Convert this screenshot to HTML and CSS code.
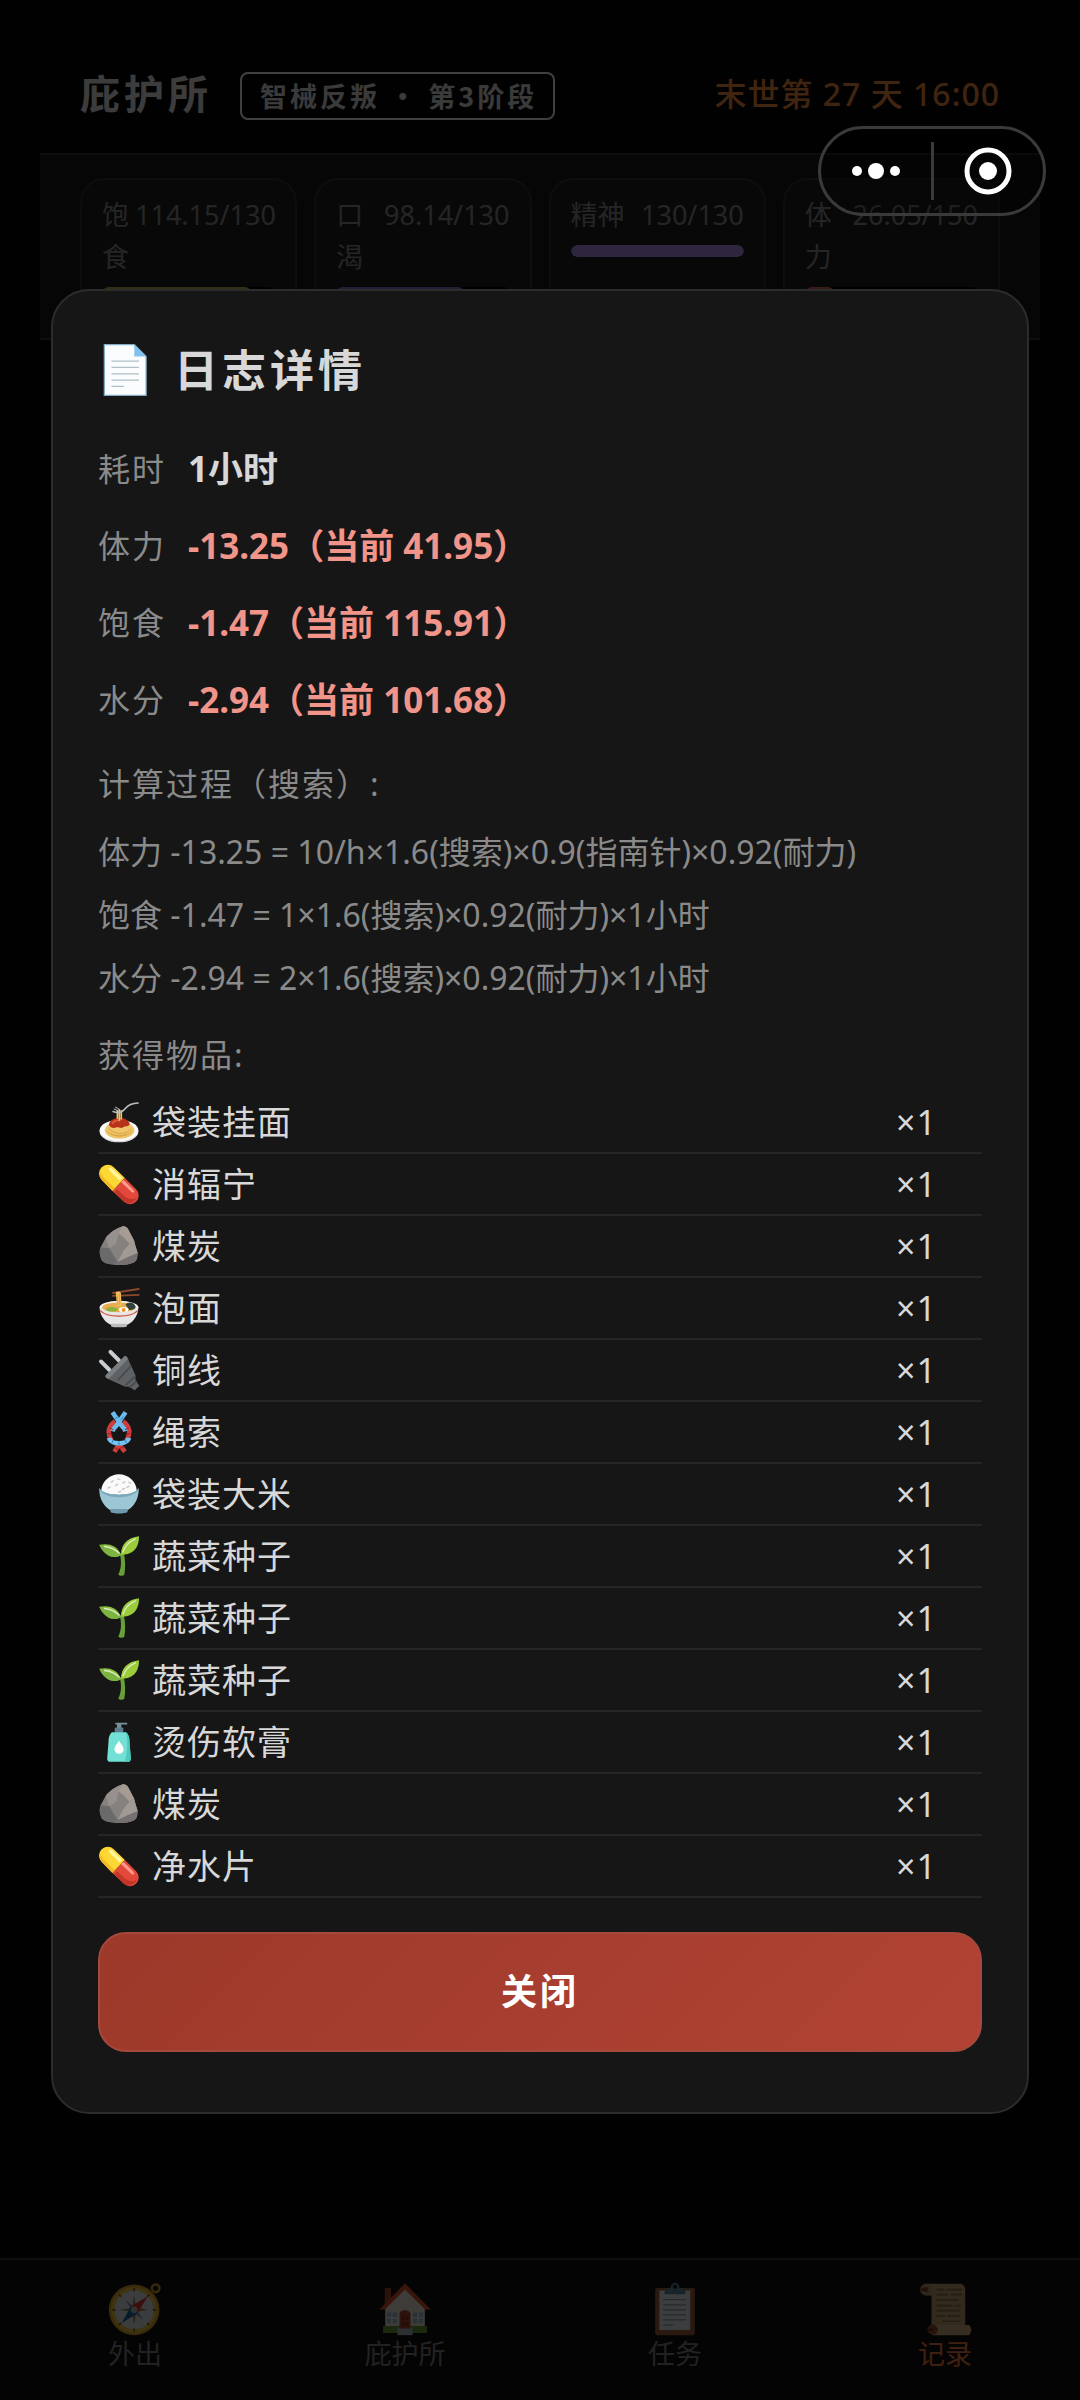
FILE: index.html
```html
<!DOCTYPE html>
<html lang="zh-CN">
<head>
  <meta charset="UTF-8">
  <meta name="viewport" content="width=device-width, initial-scale=1">
  <title>庇护所</title>
  <link rel="stylesheet" href="styles.css">
</head>
<body>

  <!-- 图标 -->
  <svg class="sprite" aria-hidden="true">
    <symbol id="i-doc" viewBox="0 0 128 128">
      <path d="M15 4h71l28 28v92H15z" fill="#fafcfe" stroke="#82aec0" stroke-width="3"/>
      <path d="M86 4v28h28z" fill="#82c0ee"/>
      <path d="M32 43h65M32 58h65M32 73h65M32 88h65M32 103h30" stroke="#b0bec5" stroke-width="3"/>
    </symbol>
    <symbol id="i-pasta" viewBox="0 0 128 128">
      <ellipse cx="64" cy="93" rx="59" ry="33" fill="#d5d5d5"/>
      <ellipse cx="64" cy="90" rx="59" ry="32" fill="#fafafa"/>
      <ellipse cx="66" cy="89" rx="45" ry="26" fill="#eec56b"/>
      <path d="M28 92c16 18 58 22 76 0M32 84c20 20 50 20 68 2M40 100c14 8 34 8 48 0" fill="none" stroke="#d9a441" stroke-width="3"/>
      <path d="M33 72c4-14 16-20 32-20s28 6 32 18c-4 10-14 4-20 10-8 6-14-2-22 1-10 3-18-1-22-9z" fill="#b8321b"/>
      <path d="M44 68c6-8 14-10 22-8" stroke="#e05a3a" stroke-width="5" fill="none" stroke-linecap="round"/>
      <path d="M65 24v36M59 28v26M71 28v28" stroke="#eec56b" stroke-width="5"/>
      <path d="M46 32c14 6 28 2 38-10 8-10 18-15 38-16" fill="none" stroke="#b8bfc4" stroke-width="5" stroke-linecap="round"/>
      <path d="M48 24l14 6M52 18l14 8" stroke="#b8bfc4" stroke-width="3"/>
    </symbol>
    <symbol id="i-pill" viewBox="0 0 128 128">
      <path d="M11 51a26 26 0 0 1 37-38l34 33-38 39z" fill="#fdd835"/>
      <path d="M82 46l34 34a26 26 0 0 1-37 38L44 85z" fill="#e2493a"/>
      <path d="M79 118a26 26 0 0 0 40-14c-12 10-28 6-40-4L58 80l-7 8z" fill="#c33528"/>
      <path d="M11 51a26 26 0 0 1-4-24c4 12 14 22 24 30l20 20-7 8z" fill="#f4b924"/>
      <path d="M32 16c8-4 14 2 20 8l22 22-8 8-30-30z" fill="#fff59d"/>
      <path d="M78 52l26 26c5 6 10 10 4 12-4 1-8-4-12-8L70 58z" fill="#ff9a8d"/>
    </symbol>
    <symbol id="i-rock" viewBox="0 0 128 128">
      <path d="M72 5c8-3 16 1 20 8l18 34c2 10 6 22 11 38-2 14 0 24-14 30-18 8-40 9-60 5-20-1-32-6-37-16C4 90 4 80 8 68L24 38C36 24 54 10 72 5z" fill="#85817f"/>
      <path d="M72 5c8-3 16 1 20 8l18 34-14 10-18-20-16-12z" fill="#a69c93"/>
      <path d="M24 38C36 24 54 10 72 5l-10 24-6 28-22 14z" fill="#96918e"/>
      <path d="M8 68l26 3 26 42-13 7c-20-1-32-6-37-16C4 90 4 80 8 68z" fill="#6b6a6b"/>
      <path d="M110 47c2 10 6 22 11 38l-27 12-34 16 16-32 20-24z" fill="#a19a94"/>
      <path d="M121 85c-2 14 0 24-14 30-18 8-40 9-60 5l13-7 34-16z" fill="#757171"/>
    </symbol>
    <symbol id="i-ramen" viewBox="0 0 128 128">
      <path d="M46 18l78-12M46 27l78-3" stroke="#8a4b2c" stroke-width="6" stroke-linecap="round"/>
      <ellipse cx="64" cy="62" rx="59" ry="20" fill="#fafafa"/>
      <path d="M5 62c0 30 22 50 36 54h46c14-4 36-24 36-54z" fill="#e6e6e6"/>
      <path d="M40 112h48v8c-10 4-38 4-48 0z" fill="#bdbdbd"/>
      <path d="M7 72c20 22 94 22 114 0" fill="none" stroke="#d84a3a" stroke-width="4"/>
      <ellipse cx="64" cy="62" rx="51" ry="15" fill="#e8ad4e"/>
      <path d="M84 54c6-10 24-8 30 4 2 8-8 12-18 12z" fill="#31413b"/>
      <ellipse cx="42" cy="68" rx="18" ry="7" fill="#8bb13b"/>
      <ellipse cx="78" cy="69" rx="14" ry="8" fill="#fff"/>
      <circle cx="78" cy="70" r="6" fill="#f79329"/>
      <path d="M54 16c10-6 18 0 16 8l2 34H58z" fill="#f4c162"/>
      <path d="M60 20v36M66 20v36" stroke="#d9963a" stroke-width="2"/>
    </symbol>
    <symbol id="i-plug" viewBox="0 0 128 128">
      <path d="M9 38l26 26M38 9l26 26" stroke="#c8ced1" stroke-width="12" stroke-linecap="round"/>
      <path d="M28 86l58-60c4 2 8 6 8 10l20 44c2 8-2 12 2 18l10 14-14 14-14-9c-8-5-12 0-20-4L36 94c-4-1-7-4-8-8z" fill="#5f6264"/>
      <path d="M23 80L80 22c6-2 12 4 10 10L34 90c-8 2-14-4-11-10z" fill="#7b7f81"/>
      <path d="M60 96l40-44M84 110l28-26M96 118l22-20" stroke="#46494b" stroke-width="5"/>
    </symbol>
    <symbol id="i-knot" viewBox="0 0 128 128">
      <path d="M50 124l16-26M82 124L62 98M42 90C26 68 32 46 52 32M86 90c16-22 10-44-10-58" fill="none" stroke="#d13d3d" stroke-width="14"/>
      <path d="M44 4l26 38c8 8 12 14 14 20M84 4L58 42c-8 8-12 14-14 20" fill="none" stroke="#6cb9ea" stroke-width="14"/>
      <path d="M34 82c4 22 56 22 60 0" fill="none" stroke="#74c3f0" stroke-width="14"/>
      <path d="M30 68l14 4M34 52l13 5M82 57l12-5M84 72l13-4M52 112l12 7M68 114l11-6" stroke="#8f2222" stroke-width="3"/>
      <path d="M52 24l11-8M69 26l9-8M46 88l-4 10M64 92v12M82 88l5 10" stroke="#2d7fb8" stroke-width="3"/>
    </symbol>
    <symbol id="i-rice" viewBox="0 0 128 128">
      <path d="M10 52C12 24 38 4 64 4s52 20 54 48c0 20-108 20-108 0z" fill="#fafafa"/>
      <path d="M40 28l6-4M60 18l7 2M54 38l6-4M76 30l6-3M88 44l6-4M74 50l7-3M30 46l7-3M94 28l6 4M62 58l7-2" stroke="#c4c4c4" stroke-width="4" stroke-linecap="round"/>
      <path d="M4 46c4 8 20 20 60 20s56-12 60-20c2 34-18 62-36 68H40C22 108 2 80 4 46z" fill="#9cc6d4"/>
      <path d="M4 46c4 8 20 20 60 20s56-12 60-20c0 14-24 28-60 28S4 60 4 46z" fill="#79a9bb"/>
      <path d="M38 110h52v9c-8 6-44 6-52 0z" fill="#6f9bad"/>
    </symbol>
    <symbol id="i-sprout" viewBox="0 0 128 128">
      <path d="M62 120c10-20 10-44 4-64l12-4c6 24 6 50 2 70-6 4-14 3-18-2z" fill="#689f38"/>
      <path d="M70 62C46 76 18 62 4 30c26-6 56 0 66 32z" fill="#8bbf3f"/>
      <path d="M70 60C70 26 92 8 125 4c0 30-14 58-55 56z" fill="#9ccc3c"/>
      <path d="M70 62C54 46 32 36 4 30c14 32 42 46 66 32z" fill="#7cb342"/>
      <path d="M20 35c18 2 34 10 44 20M76 52c6-18 20-32 38-40" fill="none" stroke="#dcedc0" stroke-width="4" stroke-linecap="round"/>
    </symbol>
    <symbol id="i-lotion" viewBox="0 0 128 128">
      <path d="M53 5h36v6H71v10H58V11h-5z" fill="#78909c"/>
      <rect x="51" y="20" width="26" height="16" rx="3" fill="#607d8b"/>
      <path d="M42 34h44c8 8 10 16 10 30l4 50c0 8-4 10-10 10H38c-6 0-10-2-10-10l4-50c0-14 2-22 10-30z" fill="#72e0d4"/>
      <path d="M86 34c8 8 10 16 10 30l4 50c0 8-4 10-10 10h-8c8-30 10-60 4-90z" fill="#4dc8bd"/>
      <path d="M64 60c8 12 14 18 14 26a14 14 0 0 1-28 0c0-8 6-14 14-26z" fill="#fff"/>
    </symbol>
    <symbol id="i-compass" viewBox="0 0 128 128">
      <circle cx="113" cy="15" r="9" fill="none" stroke="#d2a02a" stroke-width="6"/>
      <circle cx="62" cy="66" r="60" fill="#e0a92e"/>
      <circle cx="62" cy="66" r="54" fill="#f5cf48"/>
      <circle cx="62" cy="66" r="46" fill="#eceff1"/>
      <path d="M62 32l5 29 29 5-29 5-5 29-5-29-29-5 29-5z" fill="#b0875a"/>
      <path d="M40 42l22 18 22-18-18 24 18 24-22-18-22 18 18-24z" fill="#78909c"/>
      <path d="M94 34L70 74 54 58z" fill="#e53935"/>
      <path d="M32 98l22-40 16 16z" fill="#1e6fa8"/>
      <circle cx="62" cy="66" r="8" fill="#b9c6cb"/>
      <path d="M62 14v8M62 110v8M10 66h8M106 66h8M26 30l5 5M26 102l5-5M98 30l-5 5M98 102l-5-5" stroke="#8d5a24" stroke-width="4"/>
    </symbol>
    <symbol id="i-house" viewBox="0 0 128 128">
      <path d="M16 14h15v40H16z" fill="#b5492c"/>
      <path d="M64 10l47 52v50H17V62z" fill="#f3eee2"/>
      <path d="M64 3l61 62H112L64 18 16 65H3z" fill="#d9532e"/>
      <path d="M12 104h104v17H12z" fill="#689f38"/>
      <path d="M46 108h36v18H46z" fill="#b0bec5"/>
      <path d="M51 110V76c0-12 26-12 26 0v34z" fill="#b5492c"/>
      <path d="M57 80h6v10h-6zM66 80h6v10h-6zM57 95h6v10h-6zM66 95h6v10h-6z" fill="#8c3520"/>
      <path d="M21 72h24v26H21zM83 72h24v26H83z" fill="#a8c7d8"/>
      <path d="M33 72v26M21 85h24M95 72v26M83 85h24" stroke="#fff" stroke-width="3"/>
    </symbol>
    <symbol id="i-clip" viewBox="0 0 128 128">
      <rect x="17" y="14" width="94" height="112" rx="5" fill="#a8653c"/>
      <path d="M27 20h73v94H27z" fill="#eef3f6"/>
      <path d="M36 42h54M36 54h54M36 66h54M36 78h54M36 90h54M36 102h24" stroke="#90a4ae" stroke-width="3"/>
      <path d="M40 29c-4-12 6-13 13-14 2-18 20-18 22 0 7 1 17 2 13 14z" fill="#648fa6"/>
      <circle cx="64" cy="11" r="5" fill="#101010"/>
    </symbol>
    <symbol id="i-scroll" viewBox="0 0 128 128">
      <path d="M14 4h84c10 0 14 6 14 16v84H32V32H20z" fill="#c9a678"/>
      <path d="M28 102h92c8 4 8 20 0 24H34z" fill="#d8b88c"/>
      <circle cx="19" cy="18" r="14" fill="#c0966a"/>
      <path d="M3 18l10-5h11v10H13z" fill="#8a4426"/>
      <circle cx="35" cy="113" r="12" fill="#9a5635"/>
      <path d="M20 113h16" stroke="#6d3219" stroke-width="6"/>
      <path d="M44 18h18M68 18h36M44 30h26M78 30h26M44 43h52M44 56h38M88 56h14M44 68h56M44 81h20M70 81h30M58 93h42" stroke="#96703f" stroke-width="4"/>
    </symbol>
  </svg>

  <div class="page">
    <header class="header">
      <h1>庇护所</h1>
      <span class="stage">智械反叛 · 第3阶段</span>
      <time class="day">末世第 27 天 16:00</time>
    </header>

    <section class="status">
      <div class="stat">
        <div class="stat-head"><span>饱食</span><span class="num">114.15/130</span></div>
        <div class="bar"><div class="fill food" style="width: 86%"></div></div>
      </div>
      <div class="stat">
        <div class="stat-head"><span>口渴</span><span class="num">98.14/130</span></div>
        <div class="bar"><div class="fill water" style="width: 74%"></div></div>
      </div>
      <div class="stat">
        <div class="stat-head"><span>精神</span><span class="num">130/130</span></div>
        <div class="bar"><div class="fill mind" style="width: 100%"></div></div>
      </div>
      <div class="stat">
        <div class="stat-head"><span>体力</span><span class="num">26.05/150</span></div>
        <div class="bar"><div class="fill power" style="width: 17%"></div></div>
      </div>
    </section>

    <nav class="tabs">
      <a href="#out"><svg><use href="#i-compass"/></svg>外出</a>
      <a href="#home"><svg><use href="#i-house"/></svg>庇护所</a>
      <a href="#task"><svg><use href="#i-clip"/></svg>任务</a>
      <a href="#log" class="active"><svg><use href="#i-scroll"/></svg>记录</a>
    </nav>
  </div>

  <div class="mask">
    <div class="modal" role="dialog" aria-labelledby="modal-title">
      <h2 id="modal-title"><svg><use href="#i-doc"/></svg>日志详情</h2>

      <dl class="rows">
        <div><dt>耗时</dt><dd>1小时</dd></div>
        <div class="loss"><dt>体力</dt><dd>-13.25（当前 41.95）</dd></div>
        <div class="loss"><dt>饱食</dt><dd>-1.47（当前 115.91）</dd></div>
        <div class="loss"><dt>水分</dt><dd>-2.94（当前 101.68）</dd></div>
      </dl>

      <h3>计算过程（搜索）:</h3>
      <div class="calc">
        <p>体力 -13.25 = 10/h×1.6(搜索)×0.9(指南针)×0.92(耐力)</p>
        <p>饱食 -1.47 = 1×1.6(搜索)×0.92(耐力)×1小时</p>
        <p>水分 -2.94 = 2×1.6(搜索)×0.92(耐力)×1小时</p>
      </div>

      <h3>获得物品:</h3>
      <ul class="items">
        <li><svg><use href="#i-pasta"/></svg><span>袋装挂面</span><b>×1</b></li>
        <li><svg><use href="#i-pill"/></svg><span>消辐宁</span><b>×1</b></li>
        <li><svg><use href="#i-rock"/></svg><span>煤炭</span><b>×1</b></li>
        <li><svg><use href="#i-ramen"/></svg><span>泡面</span><b>×1</b></li>
        <li><svg><use href="#i-plug"/></svg><span>铜线</span><b>×1</b></li>
        <li><svg><use href="#i-knot"/></svg><span>绳索</span><b>×1</b></li>
        <li><svg><use href="#i-rice"/></svg><span>袋装大米</span><b>×1</b></li>
        <li><svg><use href="#i-sprout"/></svg><span>蔬菜种子</span><b>×1</b></li>
        <li><svg><use href="#i-sprout"/></svg><span>蔬菜种子</span><b>×1</b></li>
        <li><svg><use href="#i-sprout"/></svg><span>蔬菜种子</span><b>×1</b></li>
        <li><svg><use href="#i-lotion"/></svg><span>烫伤软膏</span><b>×1</b></li>
        <li><svg><use href="#i-rock"/></svg><span>煤炭</span><b>×1</b></li>
        <li><svg><use href="#i-pill"/></svg><span>净水片</span><b>×1</b></li>
      </ul>

      <button type="button" class="close">关闭</button>
    </div>
  </div>

  <!-- 小程序胶囊按钮 -->
  <div class="capsule">
    <button type="button" aria-label="更多">
      <svg viewBox="0 0 50 50"><circle cx="6" cy="25" r="5"/><circle cx="25" cy="25" r="8"/><circle cx="44" cy="25" r="5"/></svg>
    </button>
    <button type="button" aria-label="退出">
      <svg viewBox="0 0 50 50"><circle cx="25" cy="25" r="21" fill="none" stroke="#fff" stroke-width="5"/><circle cx="25" cy="25" r="9"/></svg>
    </button>
  </div>

</body>
</html>
```

FILE: styles.css
```css
* {
  box-sizing: border-box;
  margin: 0;
  padding: 0;
}

body {
  font-family: "Noto Sans", "Noto Sans CJK SC", sans-serif;
  background-color: #040404;
  color: #d8d8d8;
}

.sprite {
  position: absolute;
  width: 0;
  height: 0;
}

.page {
  min-height: 100vh;
  display: flex;
  flex-direction: column;
}

/* 顶部 */
.header {
  margin: 0 40px;
  padding: 72px 40px 33px;
  display: flex;
  align-items: flex-start;
  border-bottom: 2px solid #343434;
  line-height: 44px;
}

.header h1 {
  font-size: 40px;
  letter-spacing: 4px;
  color: #f0f0f0;
}

.stage {
  margin-left: 28px;
  padding: 0 16px 0 18px;
  border: 2px solid #fff;
  border-radius: 8px;
  font-family: "Noto Sans CJK SC", sans-serif;
  font-size: 27px;
  font-weight: bold;
  letter-spacing: 3px;
  color: #e8e8e8;
}

.day {
  margin-left: auto;
  font-size: 32px;
  font-weight: 500;
  letter-spacing: 1px;
  color: #fc9040;
}

/* 状态条 */
.status {
  margin: 0 40px;
  padding: 23px 40px;
  display: grid;
  grid-template-columns: repeat(4, minmax(0, 1fr));
  gap: 17px;
  background-color: #181818;
  border-bottom: 2px solid #343434;
}

.stat {
  padding: 14px 20px;
  background-color: #232323;
  border: 2px solid #343434;
  border-radius: 24px;
}

.stat-head {
  display: flex;
  justify-content: space-between;
  gap: 6px;
  font-size: 27px;
  line-height: 42px;
  color: #949494;
}

.stat-head .num {
  flex-shrink: 0;
}

.bar {
  margin-top: 9px;
  height: 12px;
  border-radius: 6px;
  background-color: #000;
  overflow: hidden;
}

.fill {
  height: 100%;
  border-radius: 6px;
}

.food { background-color: #c8b860; }
.water { background-color: #8080e0; }
.mind { background-color: #b898fc; }
.power { background-color: #e07060; }

/* 底部导航 */
.tabs {
  margin-top: auto;
  padding: 22px 0 28px;
  display: flex;
  border-top: 2px solid #3c3c3c;
  background-color: #101010;
}

.tabs a {
  flex: 1;
  display: flex;
  flex-direction: column;
  align-items: center;
  font-size: 27px;
  line-height: 36px;
  color: #888;
  text-decoration: none;
}

.tabs a.active {
  color: #fc8040;
}

.tabs svg {
  width: 54px;
  height: 54px;
}

/* 弹窗 */
.mask {
  position: fixed;
  inset: 0;
  padding: 2px 51px 0;
  display: flex;
  align-items: center;
  background-color: rgba(0, 0, 0, 0.75);
}

.modal {
  flex: 1;
  padding: 45px 45px 60px;
  background-color: #161616;
  border: 2px solid #2c2c2c;
  border-radius: 38px;
}

.modal h2 {
  display: flex;
  align-items: center;
  gap: 22px;
  font-size: 44px;
  line-height: 68px;
  letter-spacing: 4px;
}

.modal h2 svg {
  width: 54px;
  height: 54px;
}

.rows {
  margin: 37px 0 28px;
  display: flex;
  flex-direction: column;
  gap: 21px;
  line-height: 56px;
}

.rows div {
  display: flex;
  gap: 22px;
}

.rows dt {
  font-size: 32px;
  letter-spacing: 2px;
  color: #8a8a8a;
}

.rows dd {
  font-size: 35px;
  font-weight: bold;
}

.rows .loss dd {
  color: #f1948a;
}

.modal h3 {
  font-size: 32px;
  font-weight: normal;
  line-height: 56px;
  letter-spacing: 2px;
  color: #8a8a8a;
}

.calc {
  margin: 8px 0 18px;
  font-size: 32px;
  line-height: 63px;
  color: #8a8a8a;
}

.items {
  margin-top: 9px;
  list-style: none;
}

.items li {
  height: 62px;
  display: flex;
  align-items: center;
  gap: 12px;
  border-bottom: 2px solid #262626;
  font-size: 34px;
  line-height: 56px;
  letter-spacing: 1px;
  color: #d8d8d8;
}

.items svg {
  width: 42px;
  height: 42px;
}

.items span {
  flex: 1;
}

.items b {
  width: 86px;
  font-weight: normal;
}

.close {
  display: block;
  width: 100%;
  height: 120px;
  margin-top: 34px;
  border: 2px solid #a5493c;
  border-radius: 28px;
  background: linear-gradient(135deg, #9c392a, #b24334);
  font-family: inherit;
  font-size: 36px;
  font-weight: bold;
  line-height: 56px;
  letter-spacing: 3px;
  color: #fff;
}

/* 胶囊 */
.capsule {
  position: fixed;
  top: 126px;
  right: 34px;
  width: 228px;
  height: 90px;
  display: flex;
  align-items: center;
  border: 3px solid #3a3a3a;
  border-radius: 45px;
  background-color: rgba(0, 0, 0, 0.2);
}

.capsule button {
  flex: 1;
  height: 58px;
  display: flex;
  align-items: center;
  justify-content: center;
  border: none;
  background: none;
}

.capsule button + button {
  border-left: 3px solid #3a3a3a;
}

.capsule svg {
  width: 50px;
  height: 50px;
  fill: #fff;
}
```
